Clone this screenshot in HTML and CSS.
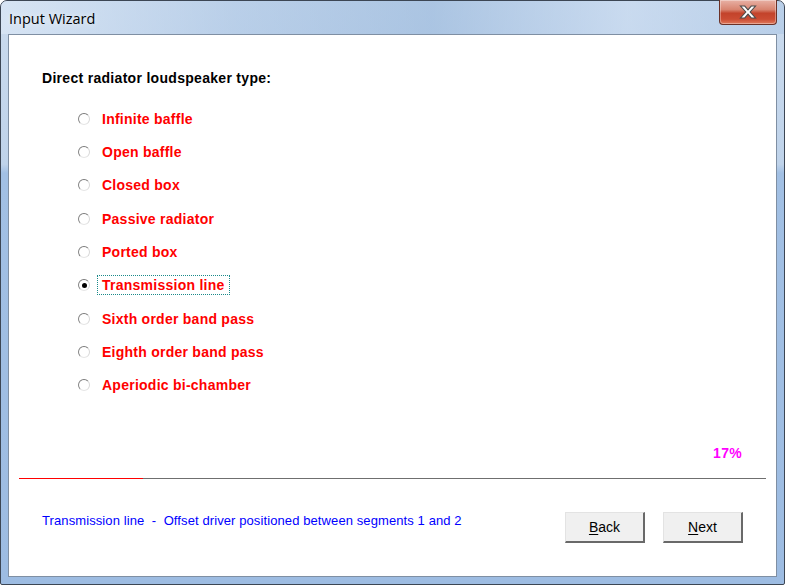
FILE: index.html
```html
<!DOCTYPE html>
<html lang="en">
<head>
<meta charset="utf-8"/>
<title>Input Wizard</title>
<link rel="stylesheet" href="styles.css">
</head>
<body>
<div class="window">
  <div class="titlebar">
    <span class="title">Input Wizard</span>
    <div class="close">
      <svg width="18" height="13" viewBox="0 0 18 13">
        <path d="M2 1 H6 L9 4.5 L12 1 H16 L11 6.5 L16 12 H12 L9 8.5 L6 12 H2 L7 6.5 Z" fill="#fff" stroke="#4a4a4a" stroke-width="1"/>
      </svg>
    </div>
  </div>
  <div class="client">
    <h1 class="heading">Direct radiator loudspeaker type:</h1>
    <div class="options">
      <label class="option"><span class="radio"></span><span class="text">Infinite baffle</span></label>
      <label class="option"><span class="radio"></span><span class="text">Open baffle</span></label>
      <label class="option"><span class="radio"></span><span class="text">Closed box</span></label>
      <label class="option"><span class="radio"></span><span class="text">Passive radiator</span></label>
      <label class="option"><span class="radio"></span><span class="text">Ported box</span></label>
      <label class="option selected"><span class="radio"></span><span class="text">Transmission line</span></label>
      <label class="option"><span class="radio"></span><span class="text">Sixth order band pass</span></label>
      <label class="option"><span class="radio"></span><span class="text">Eighth order band pass</span></label>
      <label class="option"><span class="radio"></span><span class="text">Aperiodic bi-chamber</span></label>
    </div>
    <div class="percent">17%</div>
    <div class="progress">
      <div class="progress-done"></div>
      <div class="progress-rest"></div>
    </div>
    <div class="footer">
      <div class="hint">Transmission line&nbsp; - &nbsp;Offset driver positioned between segments 1 and 2</div>
      <div class="buttons">
        <button class="btn"><u>B</u>ack</button>
        <button class="btn"><u>N</u>ext</button>
      </div>
    </div>
  </div>
</div>
</body>
</html>
```

FILE: styles.css
```css
body {
  margin: 0;
  width: 785px;
  height: 585px;
  overflow: hidden;
  background: #fff;
}

.window {
  box-sizing: border-box;
  width: 785px;
  height: 585px;
  border: 1px solid #3c4654;
  border-radius: 7px 7px 2px 2px;
  background: linear-gradient(to bottom, #cbdbee 0%, #bfd3ea 28%, #a2c0e4 29.5%, #9dbce2 100%);
  display: flex;
  flex-direction: column;
}

.titlebar {
  height: 33px;
  display: flex;
  align-items: flex-start;
  justify-content: space-between;
  background: linear-gradient(to right, rgba(220,232,246,0.7) 0%, rgba(160,190,225,0.4) 30%, rgba(140,175,215,0.5) 55%, rgba(200,218,240,0.6) 80%, rgba(160,190,225,0.4) 100%);
  border-radius: 6px 6px 0 0;
}

.title {
  font-family: "Open Sans", "Noto Sans", sans-serif;
  font-size: 14.5px;
  color: #000;
  margin: 8px 0 0 8px;
  text-shadow: 0 0 6px rgba(255,255,255,0.9);
}

.close {
  width: 58px;
  height: 25px;
  margin: -1px 7px 0 0;
  box-sizing: border-box;
  border: 1px solid #6b3127;
  border-top: none;
  border-radius: 0 0 4px 4px;
  background: linear-gradient(to bottom, #e8b1a5 0%, #d88470 40%, #c3432b 55%, #cb4c33 80%, #e07a5c 100%);
  display: flex;
  align-items: center;
  justify-content: center;
  box-shadow: inset 0 0 0 1px rgba(255,255,255,0.35);
}

.close svg {
  width: 20px;
  height: 14px;
}

.client {
  flex: 1;
  margin: 0 7px 7px 7px;
  background: #fff;
  border: 1px solid #7f8fa3;
  display: flex;
  flex-direction: column;
  font-family: "Liberation Sans", Arial, sans-serif;
}

.heading {
  margin: 35px 0 0 33px;
  font-size: 14px;
  letter-spacing: 0.3px;
  font-weight: bold;
  line-height: 16px;
  color: #000;
}

.options {
  display: flex;
  flex-direction: column;
  margin: 16px 0 0 69px;
}

.option {
  height: 33.333px;
  display: flex;
  align-items: center;
}

.radio {
  width: 12px;
  height: 12px;
  box-sizing: border-box;
  border-radius: 50%;
  border: 1px solid;
  border-color: #7a7a7a #d8d8d8 #e6e6e6 #848484;
  background: #fff;
  margin-right: 12px;
  display: flex;
  align-items: center;
  justify-content: center;
}

.selected .radio::after {
  content: "";
  width: 5px;
  height: 5px;
  border-radius: 50%;
  background: #000;
}

.text {
  font-size: 14px;
  letter-spacing: 0.25px;
  font-weight: bold;
  color: #ff0000;
  line-height: 16px;
  padding: 1px 4px;
  border: 1px solid transparent;
  margin-left: -5px;
}

.selected .text {
  border: 1px dotted #1a8a8a;
}

.percent {
  margin: 43px 0 0 0;
  padding-right: 34px;
  text-align: right;
  font-size: 14px;
  letter-spacing: 0.3px;
  font-weight: bold;
  color: #ff00ff;
  line-height: 16px;
}

.progress {
  margin: 17px 10px 0 10px;
  height: 1px;
  display: flex;
}

.progress-done {
  width: 124px;
  height: 1px;
  background: #ff0000;
}

.progress-rest {
  flex: 1;
  height: 1px;
  background: #6f6f6f;
}

.footer {
  display: flex;
  justify-content: space-between;
  align-items: flex-start;
  margin: 33px 33px 0 33px;
}

.hint {
  padding-top: 1px;
  font-size: 13px;
  letter-spacing: 0.1px;
  line-height: 16px;
  color: #0000ff;
}

.buttons {
  display: flex;
  gap: 18px;
}

.btn {
  width: 80px;
  height: 31px;
  box-sizing: border-box;
  background: #f0f0f0;
  border: none;
  border-top: 1px solid #e3e3e3;
  border-left: 1px solid #e3e3e3;
  border-right: 2px solid #696969;
  border-bottom: 2px solid #696969;
  font-family: "Liberation Sans", Arial, sans-serif;
  font-size: 14px;
  color: #000;
  padding: 0;
}

.btn u {
  text-underline-offset: 2px;
}
```
